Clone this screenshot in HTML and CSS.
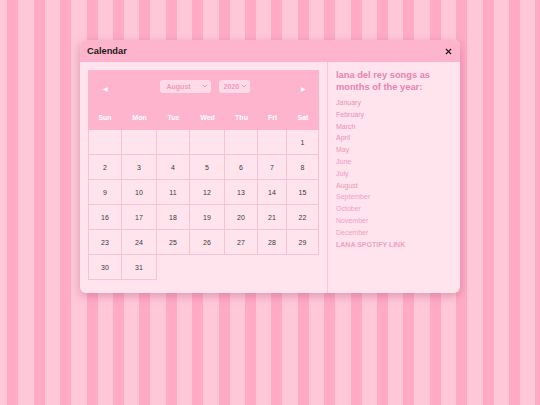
FILE: index.html
```html
<!DOCTYPE html>
<html>
<head>
<meta charset="utf-8">
<link rel="stylesheet" href="styles.css">
</head>
<body>
<div class="modal">
  <div class="modal-head">
    <span class="title">Calendar</span>
    <svg class="close" viewBox="0 0 8 8" width="7" height="7"><path d="M1 1 L7 7 M7 1 L1 7" stroke="#111" stroke-width="1.4" fill="none"/></svg>
  </div>
  <div class="modal-body">
    <div class="left">
      <div class="cal">
        <div class="cal-head">
          <div class="nav">
            <span class="arrow">&#9664;</span>
            <div class="selects">
              <div class="sel sel-month">August<svg class="chev" viewBox="0 0 6 4" width="6" height="4"><path d="M0.8 0.8 L3 3 L5.2 0.8" fill="none" stroke="#f09abb" stroke-width="1"/></svg></div>
              <div class="sel sel-year">2026<svg class="chev" viewBox="0 0 6 4" width="6" height="4"><path d="M0.8 0.8 L3 3 L5.2 0.8" fill="none" stroke="#f09abb" stroke-width="1"/></svg></div>
            </div>
            <span class="arrow">&#9654;</span>
          </div>
          <div class="weekdays">
            <span>Sun</span><span>Mon</span><span>Tue</span><span>Wed</span><span>Thu</span><span>Fri</span><span>Sat</span>
          </div>
        </div>
        <div class="grid">
          <span class="c"></span><span class="c"></span><span class="c"></span><span class="c"></span><span class="c"></span><span class="c"></span><span class="c">1</span>
          <span class="c">2</span><span class="c">3</span><span class="c">4</span><span class="c">5</span><span class="c">6</span><span class="c">7</span><span class="c">8</span>
          <span class="c">9</span><span class="c">10</span><span class="c">11</span><span class="c">12</span><span class="c">13</span><span class="c">14</span><span class="c">15</span>
          <span class="c">16</span><span class="c">17</span><span class="c">18</span><span class="c">19</span><span class="c">20</span><span class="c">21</span><span class="c">22</span>
          <span class="c">23</span><span class="c">24</span><span class="c">25</span><span class="c">26</span><span class="c">27</span><span class="c">28</span><span class="c">29</span>
          <span class="c">30</span><span class="c">31</span>
        </div>
      </div>
    </div>
    <div class="right">
      <h2 class="rt">lana del rey songs as months of the year:</h2>
      <ul class="months">
        <li>January</li>
        <li>February</li>
        <li>March</li>
        <li>April</li>
        <li>May</li>
        <li>June</li>
        <li>July</li>
        <li>August</li>
        <li>September</li>
        <li>October</li>
        <li>November</li>
        <li>December</li>
        <li class="link">LANA SPOTIFY LINK</li>
      </ul>
    </div>
  </div>
</div>
</body>
</html>
```
FILE: styles.css
```css
html, body {
  margin: 0;
  padding: 0;
}
body {
  width: 540px;
  height: 405px;
  overflow: hidden;
  font-family: "Liberation Sans", Arial, sans-serif;
  background: repeating-linear-gradient(90deg,
    #ffc8d9 0, #ffc8d9 7.4px,
    #ffabc6 7.4px, #ffabc6 18.4px,
    #ffc8d9 18.4px, #ffc8d9 26.4px);
  padding-top: 40px;
  box-sizing: border-box;
}
.modal {
  width: 380px;
  height: 253px;
  margin: 0 auto;
  background: #ffe4ee;
  border-radius: 6px;
  overflow: hidden;
  box-shadow: 0 3px 10px rgba(160, 60, 100, 0.35);
  display: flex;
  flex-direction: column;
}
.modal-head {
  height: 22px;
  background: #ffb4cd;
  display: flex;
  align-items: center;
  justify-content: space-between;
  padding: 0 8px 0 7px;
  flex: none;
}
.title {
  font-weight: bold;
  font-size: 9.3px;
  color: #1a1a1a;
}
.close {
  display: block;
}
.modal-body {
  flex: 1;
  display: flex;
}
.left {
  width: 248px;
  flex: none;
  box-sizing: border-box;
  padding: 8px 8px 0 8px;
  border-right: 1px solid #f8c6d8;
}
.cal {
  width: 231px;
}
.cal-head {
  background: #ffb4cd;
  height: 60px;
  display: flex;
  flex-direction: column;
}
.nav {
  height: 34px;
  display: flex;
  align-items: center;
  justify-content: space-between;
  padding: 0 13px 0 15px;
}
.arrow {
  color: #fff;
  font-size: 6px;
  line-height: 1;
  padding-top: 3px;
}
.selects {
  display: flex;
  gap: 8px;
  margin-left: 0;
  margin-top: -2px;
}
.sel {
  height: 13px;
  box-sizing: border-box;
  background: #ffdbe8;
  border-radius: 3px;
  color: #f09abb;
  font-weight: bold;
  font-size: 7px;
  display: flex;
  align-items: center;
  justify-content: space-between;
  padding: 0 3px 0 7px;
}
.sel-month { width: 51px; }
.sel-year { width: 31px; padding-left: 5px; }
.chev { display: block; }
.weekdays {
  display: grid;
  grid-template-columns: 34px 35px 33px 35px 33px 29px 32px;
  height: 26px;
  align-items: center;
  color: #fff;
  font-weight: bold;
  font-size: 7px;
  text-align: center;
}
.grid {
  display: grid;
  grid-template-columns: 34px 35px 33px 35px 33px 29px 32px;
  grid-auto-rows: 25px;
}
.c {
  display: flex;
  align-items: center;
  justify-content: center;
  border-right: 1px solid #f6c3d5;
  border-bottom: 1px solid #f6c3d5;
  font-size: 7px;
  color: #3a3a3a;
}
.c:nth-child(7n+1) {
  border-left: 1px solid #f6c3d5;
}
.right {
  flex: 1;
  padding: 8px 9px 0 8px;
}
.rt {
  margin: 0;
  font-size: 9.3px;
  line-height: 11.5px;
  font-weight: bold;
  color: #e683ad;
}
.months {
  list-style: none;
  margin: 4px 0 0 0;
  padding: 0;
  font-size: 7px;
  line-height: 11.8px;
  color: #e98fb4;
}
.months li:nth-child(n+5) { color: #ec97ba; }
.months li:nth-child(n+9) { color: #efa0c0; }
.months .link {
  font-weight: bold;
  color: #e683ad;
}
```
